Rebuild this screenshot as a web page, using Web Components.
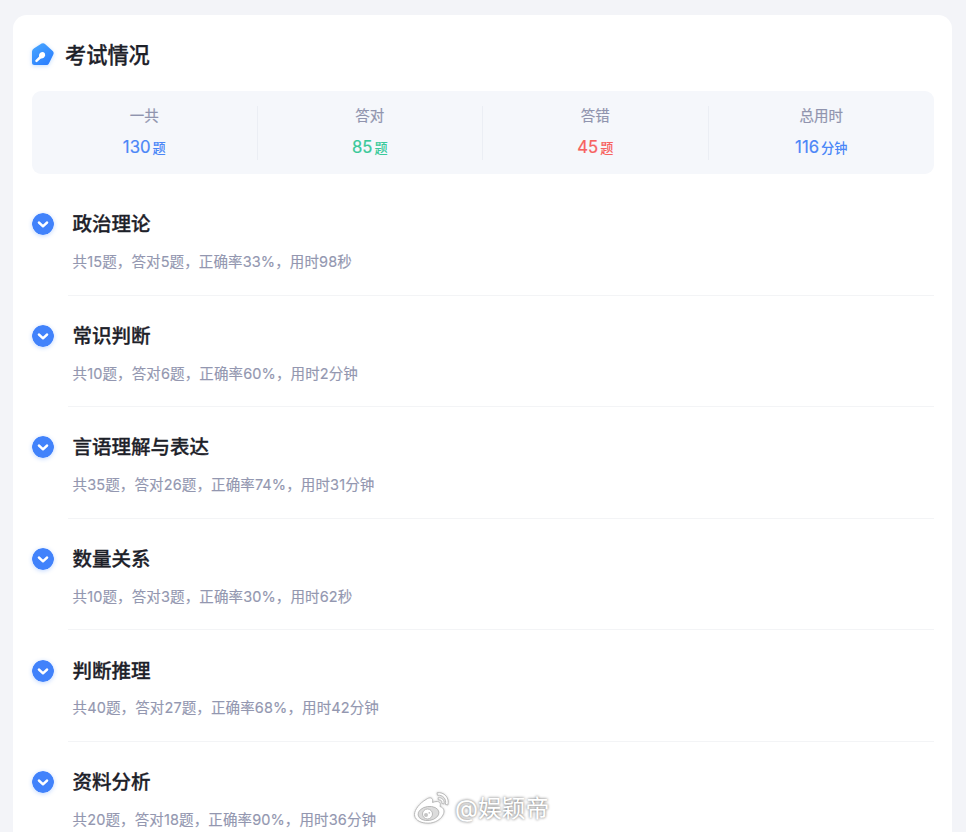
<!DOCTYPE html>
<html lang="zh-CN">
<head>
<meta charset="utf-8">
<title>考试情况</title>
<style>
    html, body {
        margin: 0;
        height: 832px;
        overflow: hidden;
    }
    body {
        display: flex;
        flex-direction: column;
        background: #f3f4f8;
        font-family: Inter, "Noto Sans CJK SC", sans-serif;
        color: #1d2129;
    }
</style>
</head>
<body>
<exam-report heading="考试情况">
    <stat-bar slot="stats">
        <stat-item label="一共" value="130" unit="题"></stat-item>
        <stat-item label="答对" value="85" unit="题" style="--tone: #3ac99a"></stat-item>
        <stat-item label="答错" value="45" unit="题" style="--tone: #f7625f"></stat-item>
        <stat-item label="总用时" value="116" unit="分钟"></stat-item>
    </stat-bar>
    <subject-row name="政治理论">共15题，答对5题，正确率33%，用时98秒</subject-row>
    <subject-row name="常识判断">共10题，答对6题，正确率60%，用时2分钟</subject-row>
    <subject-row name="言语理解与表达">共35题，答对26题，正确率74%，用时31分钟</subject-row>
    <subject-row name="数量关系">共10题，答对3题，正确率30%，用时62秒</subject-row>
    <subject-row name="判断推理">共40题，答对27题，正确率68%，用时42分钟</subject-row>
    <subject-row name="资料分析" last>共20题，答对18题，正确率90%，用时36分钟</subject-row>
</exam-report>
<water-mark>@娱颖帝</water-mark>

<script>
class ExamReport extends HTMLElement {
    constructor() {
        super();
        this.attachShadow({ mode: "open" });

        this.shadowRoot.innerHTML = `
            <style>
                :host {
                    display: block;
                    flex: 1;
                    min-height: 0;
                    box-sizing: border-box;
                    margin: 15px 14px 0 13px;
                    padding: 25px 18px 0 19px;
                    background: white;
                    border-radius: 14px 14px 0 0;
                }
                header {
                    display: flex;
                    align-items: center;
                    height: 30px;
                    margin-bottom: 21px;
                }
                svg {
                    display: block;
                    width: 24px;
                    height: 26px;
                    margin: 0 10px 0 -1px;
                    overflow: visible;
                    filter: drop-shadow(0 1px 2px rgba(50, 140, 255, 0.3));
                }
                h1 {
                    margin: 0;
                    font-size: 21.2px;
                    font-weight: 500;
                    line-height: 30px;
                    -webkit-text-stroke: 0.3px currentColor;
                }
                .rows {
                    padding-top: 21px;
                }
            </style>
            <header>
                <svg viewBox="0 0 24 26">
                    <defs>
                        <linearGradient id="g" x1="0" y1="0" x2="0.7" y2="1">
                            <stop offset="0" stop-color="#4aa9ff"/>
                            <stop offset="1" stop-color="#2b7fff"/>
                        </linearGradient>
                    </defs>
                    <path fill="url(#g)" d="M3.2 6.2 10.6 1.6Q12.4 .6 14 1.9L21.7 9.1Q23.2 10.6 22.3 12.4L17.9 21.5Q17.2 23 15.5 23H3.5Q1 23 1 20.5V9.5Q1 7.5 3.2 6.2Z"/>
                    <path stroke="white" stroke-width="2.5" stroke-linecap="round" d="M5.5 18.8 9.5 15"/>
                    <path fill="white" d="M8 14.8Q7.6 10.2 11.3 9.9 14.4 10.2 14.1 13.4 13.2 16.8 9.6 16.4Z"/>
                </svg>
                <h1></h1>
            </header>
            <slot name="stats"></slot>
            <div class="rows"><slot></slot></div>
        `;
    }

    connectedCallback() {
        this.shadowRoot.querySelector("h1").textContent = this.getAttribute("heading");
    }
}

class StatBar extends HTMLElement {
    constructor() {
        super();
        this.attachShadow({ mode: "open" });

        this.shadowRoot.innerHTML = `
            <style>
                :host {
                    display: grid;
                    grid-template-columns: repeat(4, 1fr);
                    align-items: center;
                    height: 83px;
                    background: #f5f7fb;
                    border-radius: 9px;
                }
                ::slotted(:not(:last-child)) {
                    border-right: 1px solid #ebeef4;
                }
            </style>
            <slot></slot>
        `;
    }
}

class StatItem extends HTMLElement {
    constructor() {
        super();
        this.attachShadow({ mode: "open" });

        this.shadowRoot.innerHTML = `
            <style>
                :host {
                    display: flex;
                    flex-direction: column;
                    align-items: center;
                    height: 54px;
                    box-sizing: border-box;
                }
                .label {
                    height: 26px;
                    margin-top: -2px;
                    font-size: 14.5px;
                    line-height: 24px;
                    color: #9094ae;
                    -webkit-text-stroke: 0.2px currentColor;
                }
                .figure {
                    display: flex;
                    align-items: baseline;
                    gap: 2px;
                    margin-top: 6px;
                    line-height: 26px;
                    color: var(--tone, #4a86f7);
                }
                .value {
                    font-size: 16.7px;
                    -webkit-text-stroke: 0.2px currentColor;
                }
                .unit {
                    font-size: 13.2px;
                    font-weight: 500;
                }
            </style>
            <span class="label"></span>
            <span class="figure"><span class="value"></span><span class="unit"></span></span>
        `;
    }

    connectedCallback() {
        for (const key of ["label", "value", "unit"]) {
            this.shadowRoot.querySelector("." + key).textContent = this.getAttribute(key);
        }
    }
}

class SubjectRow extends HTMLElement {
    constructor() {
        super();
        this.attachShadow({ mode: "open" });

        this.shadowRoot.innerHTML = `
            <style>
                :host {
                    display: flex;
                    height: 111.55px;
                }
                :host([last]) {
                    height: 79px;
                }
                :host([last]) .body {
                    height: 79px;
                    border-bottom: none;
                }
                svg {
                    flex: none;
                    width: 22px;
                    height: 22px;
                    margin: 18.4px 14px 0 0;
                    border-radius: 50%;
                    box-shadow: 0 1px 4px rgba(60, 130, 255, 0.3);
                }
                .body {
                    flex: 1;
                    box-sizing: border-box;
                    height: 100.6px;
                    padding: 14.4px 0 0 4.6px;
                    border-bottom: 1px solid #f3f4f6;
                }
                h2 {
                    margin: 0;
                    font-size: 19.5px;
                    font-weight: 500;
                    line-height: 30px;
                    -webkit-text-stroke: 0.3px currentColor;
                }
                p {
                    margin: 9.6px 0 0;
                    font-size: 14.5px;
                    line-height: 25px;
                    letter-spacing: 0.12px;
                    white-space: nowrap;
                    color: #9397b0;
                    -webkit-text-stroke: 0.15px currentColor;
                }
            </style>
            <svg viewBox="0 0 22 22">
                <circle cx="11" cy="11" r="11" fill="#4182fb"/>
                <path fill="none" stroke="white" stroke-width="2.4" stroke-linecap="round" stroke-linejoin="round" d="M6.9 9.5 11 13.3 15.1 9.5"/>
            </svg>
            <div class="body">
                <h2></h2>
                <p><slot></slot></p>
            </div>
        `;
    }

    connectedCallback() {
        this.shadowRoot.querySelector("h2").textContent = this.getAttribute("name");
    }
}

class WaterMark extends HTMLElement {
    constructor() {
        super();
        this.attachShadow({ mode: "open" });

        // sits over the page content, near the bottom edge
        this.shadowRoot.innerHTML = `
            <style>
                :host {
                    position: absolute;
                    left: 413px;
                    top: 790px;
                    display: flex;
                    align-items: center;
                    gap: 4px;
                    height: 36px;
                    font-size: 23.8px;
                    line-height: 36px;
                    color: white;
                    text-shadow: 0 0 3px rgba(0, 0, 0, 0.4), 0 0 3px rgba(0, 0, 0, 0.3);
                }
                svg {
                    width: 38px;
                    height: 36px;
                    filter: drop-shadow(0 0 1px rgba(0, 0, 0, 0.2));
                }
                span {
                    padding-top: 2px;
                }
            </style>
            <svg viewBox="0 0 38 36" fill="white" stroke="#b4b4b4" stroke-width="0.9">
                <path d="M13 9.5C17 6.5 20.5 7.5 19.5 12.5 24.5 10.5 28.5 11.5 27 16.5 31 17.8 32 21 30 25 27 31 19 34 12.5 33 6 32.5 1.5 29 1.5 24.5 1.5 19.5 7 13 13 9.5Z"/>
                <ellipse cx="15.500" cy="23.500" rx="10.5" ry="7" fill="#dcdcdc" transform="rotate(-8 15.5 23.5)"/>
                <circle cx="14.5" cy="24" r="5" fill="white"/>
                <circle cx="13" cy="25" r="2" fill="#c4c4c4" stroke="none"/>
                <circle cx="16.3" cy="22.8" r="0.9" fill="#c4c4c4" stroke="none"/>
                <path d="M24 2.8C31 1.500 37 8 34.8 15L32.3 14.3C34 9 29.5 4.5 24.5 5.3Z"/>
                <path d="M25 7.8C29 7 32 10.5 30.8 14L28.8 13.4C29.5 11 27.8 9.5 25.4 9.9Z"/>
            </svg>
            <span><slot></slot></span>
        `;
    }
}

customElements.define("exam-report", ExamReport);
customElements.define("stat-bar", StatBar);
customElements.define("stat-item", StatItem);
customElements.define("subject-row", SubjectRow);
customElements.define("water-mark", WaterMark);
</script>
</body>
</html>
